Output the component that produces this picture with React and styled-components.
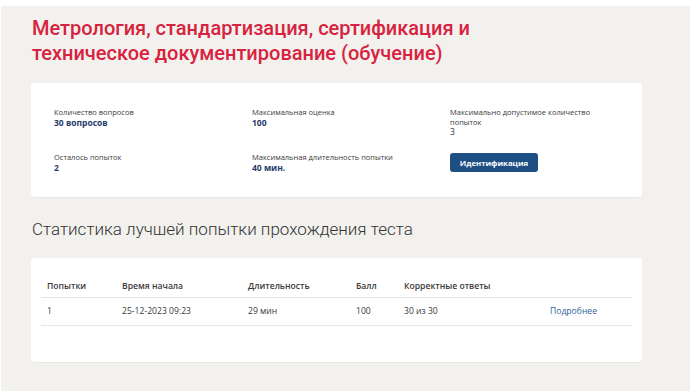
import React from "react";
import styled, { createGlobalStyle } from "styled-components";

const GlobalStyle = createGlobalStyle`
  html, body {
    margin: 0;
    padding: 0;
    background: #ffffff;
  }
  body {
    font-family: "Open Sans", "Liberation Sans", sans-serif;
    color: #333;
  }
`;

const Page = styled.div`
  margin: 6px 3px 0 1px;
  height: 385px;
  box-sizing: border-box;
  background: #f2f1ee;
  padding: 10px 48px 0 30px;
  overflow: hidden;
`;

const PageTitle = styled.h1`
  margin: 0 0 17px 1px;
  font-family: Roboto, "Liberation Sans", sans-serif;
  font-weight: 500;
  font-size: 20px;
  line-height: 25px;
  color: #d7233f;
  width: 460px;
`;

const Card = styled.div`
  background: #ffffff;
  border-radius: 3px;
  box-shadow: 0 1px 1px rgba(0, 0, 0, 0.04);
  padding: ${(p) => p.$pad};
`;

const InfoGrid = styled.div`
  display: grid;
  grid-template-columns: 198px 198px 1fr;
  row-gap: 16px;
`;

const InfoItem = styled.div`
  display: flex;
  flex-direction: column;
  align-items: flex-start;
`;

const Label = styled.div`
  font-size: 7.5px;
  line-height: 9.5px;
  color: #3a3a3a;
  max-width: 150px;
`;

const Value = styled.div`
  font-size: 8.5px;
  line-height: 10px;
  font-weight: ${(p) => (p.$plain ? 400 : 700)};
  color: ${(p) => (p.$plain ? "#333" : "#1f3b6a")};
`;

const Button = styled.button`
  width: 88px;
  height: 19px;
  border: none;
  border-radius: 3px;
  background: #1d4e84;
  color: #fff;
  font-family: "Open Sans", "Liberation Sans", sans-serif;
  font-weight: 700;
  font-size: 7.8px;
  padding: 0;
  cursor: pointer;
`;

const SectionTitle = styled.h2`
  margin: 21px 0 18px 1px;
  font-family: Roboto, "Liberation Sans", sans-serif;
  font-weight: 300;
  font-size: 17px;
  line-height: 22px;
  color: #333;
`;

const Table = styled.table`
  width: 100%;
  table-layout: fixed;
  border-collapse: collapse;
  font-size: 8.6px;
  color: #3a3a3a;
`;

const Th = styled.th`
  text-align: left;
  font-weight: 600;
  height: 21px;
  padding: 0 0 0 6px;
  width: ${(p) => p.$w || "auto"};
  border-bottom: 1px solid #e6e6e6;
  vertical-align: middle;
  white-space: nowrap;
`;

const Td = styled.td`
  height: 27px;
  padding: 0 0 0 6px;
  border-bottom: 1px solid #e6e6e6;
  vertical-align: middle;
  white-space: nowrap;
`;

const MoreLink = styled.a`
  color: #2f6399;
  text-decoration: none;
`;

const info = [
  { label: "Количество вопросов", value: "30 вопросов" },
  { label: "Максимальная оценка", value: "100" },
  { label: "Максимально допустимое количество попыток", value: "3", plain: true },
  { label: "Осталось попыток", value: "2" },
  { label: "Максимальная длительность попытки", value: "40 мин." },
];

const rows = [
  { n: "1", start: "25-12-2023 09:23", dur: "29 мин", score: "100", correct: "30 из 30" },
];

export default function App() {
  return (
    <>
      <GlobalStyle />
      <Page>
        <PageTitle>
          Метрология, стандартизация, сертификация и техническое документирование (обучение)
        </PageTitle>

        <Card $pad="25px 23px 24px">
          <InfoGrid>
            {info.map((item) => (
              <InfoItem key={item.label}>
                <Label>{item.label}</Label>
                <Value $plain={item.plain}>{item.value}</Value>
              </InfoItem>
            ))}
            <InfoItem>
              <Button>Идентификация</Button>
            </InfoItem>
          </InfoGrid>
        </Card>

        <SectionTitle>Статистика лучшей попытки прохождения теста</SectionTitle>

        <Card $pad="18px 10px 36px 10px">
          <Table>
            <thead>
              <tr>
                <Th $w="69px">Попытки</Th>
                <Th $w="120px">Время начала</Th>
                <Th $w="102px">Длительность</Th>
                <Th $w="42px">Балл</Th>
                <Th $w="140px">Корректные ответы</Th>
                <Th />
              </tr>
            </thead>
            <tbody>
              {rows.map((r) => (
                <tr key={r.n}>
                  <Td>{r.n}</Td>
                  <Td>{r.start}</Td>
                  <Td>{r.dur}</Td>
                  <Td>{r.score}</Td>
                  <Td>{r.correct}</Td>
                  <Td>
                    <MoreLink href="#">Подробнее</MoreLink>
                  </Td>
                </tr>
              ))}
            </tbody>
          </Table>
        </Card>
      </Page>
    </>
  );
}
